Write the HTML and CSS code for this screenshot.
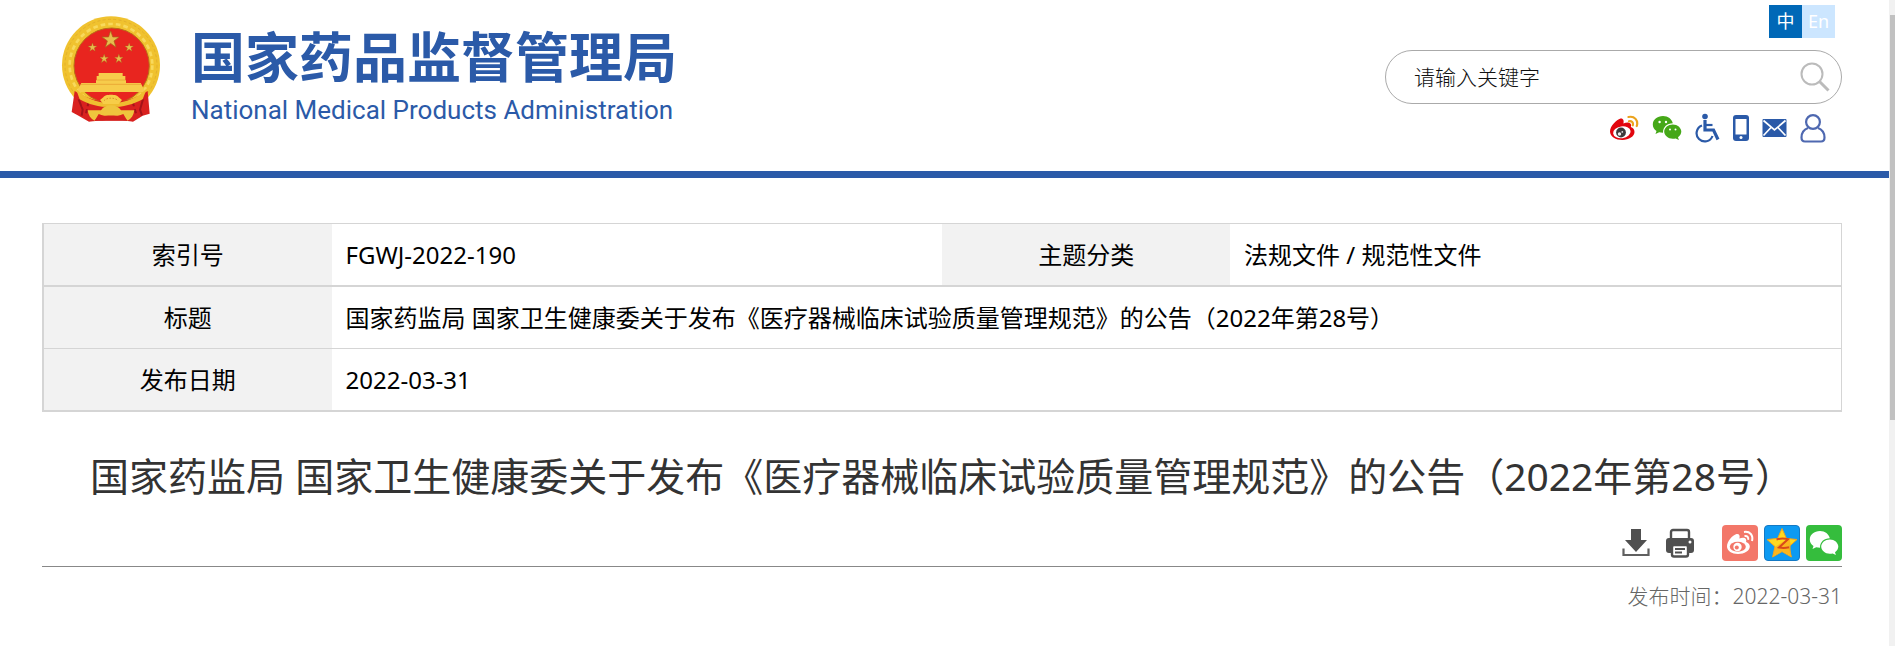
FILE: index.html
```html
<!DOCTYPE html>
<html lang="zh-CN">
<head>
    <meta charset="UTF-8">
    <meta name="viewport" content="width=device-width, initial-scale=1.0">
    <title>国家药品监督管理局</title>
    <link rel="stylesheet" href="styles.css">
</head>
<body>
    <svg class="defs" aria-hidden="true">
        <defs>
            <symbol id="star" viewBox="0 0 24 24"><path d="M12 0l2.900 8.700H24l-7.400 5.500L19.400 23 12 17.600 4.600 23l2.800-8.800L0 8.700h9.100z"/></symbol>
            <symbol id="wechat" viewBox="0 0 30 26">
                <path d="M11 1C5.200 1 .8 4.700.8 9.400c0 2.700 1.400 5 3.700 6.500l-1 3.200 3.700-1.900c1.200.3 2.400.5 3.800.5C11 12 15 8.400 20.800 8.300 20 4.100 16 1 11 1z"/>
                <path d="M29.300 16.600c0-4-3.800-7.200-8.500-7.200s-8.600 3.200-8.600 7.200 3.900 7.200 8.600 7.200c1 0 2-.2 2.900-.4l3.200 1.700-.9-2.900c2-1.300 3.300-3.400 3.300-5.600z"/>
                <g class="eye"><circle cx="7.600" cy="7" r="1.200"/><circle cx="14" cy="7" r="1.200"/><circle cx="18" cy="14.500" r="1"/><circle cx="23.500" cy="14.500" r="1"/></g>
            </symbol>
        </defs>
    </svg>

    <div class="page">
        <header class="header">
            <a class="logo" href="#">
                <svg class="emblem" viewBox="60 45 306 324" aria-hidden="true">
                    <circle cx="213" cy="196" r="147" fill="#f0c22f"/>
                    <circle cx="213" cy="196" r="138" fill="none" stroke="#e3b02c" stroke-width="3" stroke-dasharray="9 7"/>
                    <circle cx="213" cy="196" r="124" fill="none" stroke="#f8d95c" stroke-width="8" stroke-dasharray="14 9"/>
                    <circle cx="215" cy="197" r="113" fill="#e8251f" stroke="#b86d18" stroke-width="3"/>
                    <g fill="#e7bd4d" stroke="#a9651b" stroke-width="1">
                        <use href="#star" x="186" y="92" width="52" height="52"/>
                        <use href="#star" x="144" y="128" width="27" height="27"/>
                        <use href="#star" x="254" y="128" width="27" height="27"/>
                        <use href="#star" x="179" y="162" width="27" height="27"/>
                        <use href="#star" x="223" y="162" width="27" height="27"/>
                    </g>
                    <path d="M176 219h72v9h8v13h2v8h44l14 27H110l14-27h44v-8h2v-13h6z" fill="#f7cc4b"/>
                    <path d="M172 240h84M122 253h182" stroke="#e59a2e" stroke-width="2"/>
                    <path d="M104 273c35 22 65 32 110 33 45-1 75-11 109-33l6 68-21 6-29 18c-20-6-112-4-132 0l-34-19-18-10z" fill="#d9211f"/>
                    <path d="M116 298l12 31-3 18M309 298l-9 31 6 17M145 310l-7 30M279 310l9 30" stroke="#a41319" stroke-width="6" fill="none"/>
                    <path d="M107 265c25 28 60 43 106 46 48-3 81-18 108-46l-13 33c-27 15-58 23-95 25-37-2-69-10-94-25z" fill="#efbd30"/>
                    <path d="M190 292c4-10 42-10 46 0l10 8-10 12h-46l-10-12z" fill="#f7cd48"/>
                    <path d="M192 302c8-10 34-10 42 0" fill="none" stroke="#d9922b" stroke-width="3" stroke-dasharray="5 4"/>
                    <path d="M125 315c34 8 64 8 88 3 24 5 54 5 88-3l-7 10c-31 10-61 10-81 0-22 10-52 10-82 0z" fill="#d9211f"/>
                    <path d="M143 331h40c12-20 48-20 60 0h40c-2 15-9 26-21 31l-12-20c-20 10-54 10-74 0l-12 20c-12-5-19-16-21-31z" fill="#efc43d"/>
                    <path d="M164 362c10-21 88-21 98 0z" fill="#d4201e"/>
                </svg>
                <span class="logo-text">
                    <strong class="logo-cn">国家药品监督管理局</strong>
                    <span class="logo-en">National Medical Products Administration</span>
                </span>
            </a>

            <div class="tools">
                <nav class="lang">
                    <a class="active" href="#">中</a>
                    <a href="#">En</a>
                </nav>
                <form class="search">
                    <input type="text" aria-label="请输入关键字" placeholder="请输入关键字">
                    <button type="button" aria-label="搜索">
                        <svg width="30" height="30" viewBox="0 0 30 30" fill="none" stroke="#bbb" stroke-width="2"><circle cx="12" cy="12" r="10.500"/><path d="M19 19l9.500 9.500" stroke-width="3"/></svg>
                    </button>
                </form>
                <div class="links">
                    <a href="#" aria-label="微博">
                        <svg width="30" height="26" viewBox="0 0 30 26">
                            <path d="M11.500 3.500c-4 1.300-10.500 7.600-10.500 13C1 21.500 7 25 13.300 25 20 25 25.500 21.200 25.500 17c0-2.600-1.500-4.200-3.700-5 .8-2 .2-3.800-2.100-4.300-1.700-.3-3.600.2-5.300.9.800-3-.2-5.600-2.900-5.100z" fill="#e2060e"/>
                            <ellipse cx="12.800" cy="17.300" rx="8.800" ry="5.900" fill="#fff" transform="rotate(-8 13 17)"/>
                            <circle cx="12" cy="17.500" r="4.900" fill="#3d3a3b"/><circle cx="10.500" cy="19" r="1.700" fill="#eee"/><circle cx="13.300" cy="16.900" r=".9" fill="#ddd"/>
                            <path d="M19.500 2c6-1.300 10 3.300 8.300 9M20 6.300c2.800-.5 4.500 1.300 3.800 4" fill="none" stroke="#eba31e" stroke-width="2.200" stroke-linecap="round"/>
                        </svg>
                    </a>
                    <a class="wechat" href="#" aria-label="微信"><svg width="30" height="26"><use href="#wechat"/></svg></a>
                    <a href="#" aria-label="无障碍">
                        <svg width="25" height="30" viewBox="0 0 25 30" fill="none" stroke="#2b5aa8">
                            <circle cx="10" cy="3.500" r="2.800" fill="#2b5aa8" stroke="none"/>
                            <path d="M10 7v10h8.500l4.500 9.500" stroke-width="3.200"/><path d="M10 12h7.500" stroke-width="2.200"/>
                            <path d="M7 12.500A8.200 8.200 0 1 0 17.500 23" stroke-width="2.200"/>
                        </svg>
                    </a>
                    <a href="#" aria-label="手机版">
                        <svg width="16" height="26" viewBox="0 0 16 26"><rect width="16" height="26" rx="3" fill="#2b5aa8"/><rect x="2.500" y="4" width="11" height="15.500" fill="#fff"/><circle cx="8" cy="22.600" r="1.500" fill="#fff"/></svg>
                    </a>
                    <a href="#" aria-label="邮箱">
                        <svg width="25" height="18" viewBox="0 0 24 18"><rect width="24" height="18" rx="1" fill="#2b5aa8"/><path d="M1 1.500l11 9.500L23 1.500M1 16.500L8.500 8.500M23 16.500l-7.500-8" fill="none" stroke="#fff" stroke-width="1.700"/></svg>
                    </a>
                    <a href="#" aria-label="个人中心">
                        <svg width="26" height="30" viewBox="0 0 26 30" fill="none" stroke="#4e68b0" stroke-width="2.200"><circle cx="13" cy="9" r="6.900"/><path d="M8 15c-4 1.500-6.500 5-6.500 9.500 0 2.500 1 4 3.500 4h16c2.500 0 3.500-1.500 3.500-4 0-4.500-2.500-8-6.500-9.500"/></svg>
                    </a>
                </div>
            </div>
        </header>

        <main class="content">
            <table class="info">
                <colgroup><col class="label"><col class="value"><col class="label"><col class="value"></colgroup>
                <tr>
                    <th scope="row">索引号</th>
                    <td>FGWJ-2022-190</td>
                    <th scope="row">主题分类</th>
                    <td>法规文件 / 规范性文件</td>
                </tr>
                <tr>
                    <th scope="row">标题</th>
                    <td colspan="3">国家药监局 国家卫生健康委关于发布《医疗器械临床试验质量管理规范》的公告（2022年第28号）</td>
                </tr>
                <tr>
                    <th scope="row">发布日期</th>
                    <td colspan="3">2022-03-31</td>
                </tr>
            </table>

            <h1>国家药监局 国家卫生健康委关于发布《医疗器械临床试验质量管理规范》的公告（2022年第28号）</h1>

            <div class="actions">
                <button type="button" aria-label="下载">
                    <svg width="28" height="28" viewBox="0 0 28 28"><path d="M9 0h10v11h6L14 23 3 11h6z" fill="#505050"/><path d="M1.500 19.500V26h25v-6.500" fill="none" stroke="#606060" stroke-width="2.200"/></svg>
                </button>
                <button type="button" aria-label="打印">
                    <svg width="30" height="30" viewBox="0 0 30 30">
                        <rect x="6" y="2" width="18" height="12" rx="2" fill="#fff" stroke="#505050" stroke-width="2.400"/>
                        <path d="M4 10h22c2 0 3 1 3 3v9c0 2-1 3-3 3H4c-2 0-3-1-3-3v-9c0-2 1-3 3-3z" fill="#505050"/>
                        <rect x="7" y="17" width="16" height="11.500" rx="2" fill="#fff" stroke="#505050" stroke-width="2.400"/>
                        <path d="M10 21h10M10 24.500h7" stroke="#505050" stroke-width="1.800"/><circle cx="25" cy="14" r="1.500" fill="#fff"/>
                    </svg>
                </button>
                <div class="share">
                    <a class="share-weibo" href="#" aria-label="分享到微博">
                        <svg width="30" height="26" viewBox="0 0 30 26">
                            <path d="M11.500 4c-4 1.300-9.500 7-9.500 12.500C2 21 7 24 13 24c6.500 0 11.800-3.200 11.800-7.500 0-2.300-1.500-3.800-3.700-4.500.7-3-.6-4.600-3.200-4.300-1.200.1-2.500.5-3.500.9.800-3-.2-5.100-2.900-4.600z" fill="#fff"/>
                            <ellipse cx="12.800" cy="16.800" rx="8" ry="5" fill="#f37769"/><circle cx="12.500" cy="17" r="4.200" fill="#fff"/><circle cx="11.800" cy="17.500" r="2" fill="#f37769"/>
                            <path d="M19 2c6-1 9.500 3.300 8 9M19.500 6c3-.4 4.200 1.300 3.600 3.800" fill="none" stroke="#fff" stroke-width="2"/>
                        </svg>
                    </a>
                    <a class="share-qzone" href="#" aria-label="分享到QQ空间">
                        <svg width="34" height="34" viewBox="0 0 34 34">
                            <path d="M17 2.500l4.400 9.900 10.600 1.100-8 7.100 2.400 10.400L17 25.600 7.600 31 10 20.600l-8-7.100 10.600-1.100z" fill="#ffd91f" stroke="#f3a51b"/>
                            <path d="M10 21l14-9c3 7 1 13 2 18l-9-5-9 5z" fill="#f8a51c" opacity=".7"/>
                            <path d="M11.500 13.500c4-1.200 8-1.200 11.500-.2l-9 8.200c3.500.7 7 .5 10-.2" fill="none" stroke="#d9491a" stroke-width="2"/>
                        </svg>
                    </a>
                    <a class="share-wechat" href="#" aria-label="分享到微信"><svg width="30" height="26"><use href="#wechat"/></svg></a>
                </div>
            </div>

            <p class="date">发布时间：2022-03-31</p>
        </main>
    </div>
    <div class="scrollbar"><div class="thumb"></div></div>
</body>
</html>
```
FILE: styles.css
```css
* {
    box-sizing: border-box;
}
body {
    display: flex;
    min-height: 100vh;
    margin: 0;
    font-family: "Noto Sans", "Noto Sans CJK SC", sans-serif;
    background-color: #fff;
    color: #000;
}
a {
    color: inherit;
    text-decoration: none;
}
button {
    display: flex;
    padding: 0;
    border: none;
    background: none;
    cursor: pointer;
}
svg {
    display: block;
}
.defs {
    position: absolute;
    width: 0;
    height: 0;
}
.page {
    flex: 1;
    min-width: 0;
}

.header {
    display: flex;
    justify-content: space-between;
    height: 178px;
    padding: 5px 47px 0 60px;
    border-bottom: 7px solid #2b5aa8;
}
.logo {
    display: flex;
    align-items: flex-start;
    gap: 29px;
    padding-top: 10px;
    color: #2b5aa8;
}
.emblem {
    width: 102px;
    height: 108px;
}
.logo-text {
    display: flex;
    flex-direction: column;
}
.logo-cn {
    font-family: "Noto Sans CJK SC", sans-serif;
    font-size: 54px;
    font-weight: 700;
    line-height: 80px;
}
.logo-en {
    font-family: Roboto, sans-serif;
    font-size: 26px;
    line-height: 30px;
}

.tools {
    display: flex;
    flex-direction: column;
    align-items: flex-end;
    width: 457px;
}
.lang {
    display: flex;
    margin-right: 7px;
}
.lang a {
    width: 33px;
    height: 33px;
    font-size: 18px;
    line-height: 32px;
    text-align: center;
    color: #fff;
    background-color: #cce6ff;
}
.lang a.active {
    background-color: #0068b7;
}
.search {
    display: flex;
    align-items: center;
    width: 100%;
    height: 54px;
    margin-top: 12px;
    padding: 0 11px 0 28px;
    border: 1px solid #aaa;
    border-radius: 27px;
}
.search input {
    flex: 1;
    min-width: 0;
    padding: 0;
    border: none;
    outline: none;
    font-family: inherit;
    font-size: 21px;
    font-weight: 300;
    background: none;
}
.search input::placeholder {
    color: #111;
}
.links {
    display: flex;
    align-items: center;
    gap: 13px;
    height: 30px;
    margin: 9px 16px 0 0;
}
.wechat {
    fill: #45a818;
}
.eye {
    fill: #fff;
}

.content {
    padding: 45px 47px 0 42px;
}
.info {
    width: 100%;
    table-layout: fixed;
    border: 1px solid #d5d5d5;
    border-width: 1px 1px 1px 2px;
    border-spacing: 0;
    font-size: 24px;
    line-height: 37px;
}
.info .label {
    width: 16%;
}
.info .value {
    width: 34%;
}
.info th,
.info td {
    padding: 12px 14px;
    border-bottom: 1px solid #d5d5d5;
    font-weight: 400;
    text-align: left;
}
.info th {
    text-align: center;
    background-color: #f2f2f2;
}
.info tr:first-child th,
.info tr:first-child td {
    border-bottom-width: 2px;
}
h1 {
    margin: 32px 0 0;
    font-size: 39px;
    font-weight: 400;
    line-height: 64px;
    text-align: center;
    color: #333;
}
.actions {
    display: flex;
    justify-content: flex-end;
    align-items: center;
    gap: 15px;
    margin-top: 17px;
    padding-bottom: 5px;
    border-bottom: 1px solid #888;
}
.share {
    display: flex;
    gap: 6px;
    margin-left: 12px;
}
.share a {
    display: flex;
    align-items: center;
    justify-content: center;
    width: 36px;
    height: 36px;
    border-radius: 4px;
}
.share-weibo {
    background-color: #f37769;
}
.share-qzone {
    border: 1px solid #1479c4;
    background-color: #0d9af2;
}
.share-wechat {
    fill: #fff;
    background-color: #35bd3d;
}
.share-wechat .eye {
    fill: #35bd3d;
}
.date {
    margin: 13px 0 0;
    font-size: 21px;
    font-weight: 300;
    line-height: 32px;
    text-align: right;
    color: #666;
}

.scrollbar {
    width: 6px;
    padding: 15px 0 0 1px;
    background-color: #f1f1f1;
}
.thumb {
    height: 405px;
    background-color: #c1c1c1;
}
```
